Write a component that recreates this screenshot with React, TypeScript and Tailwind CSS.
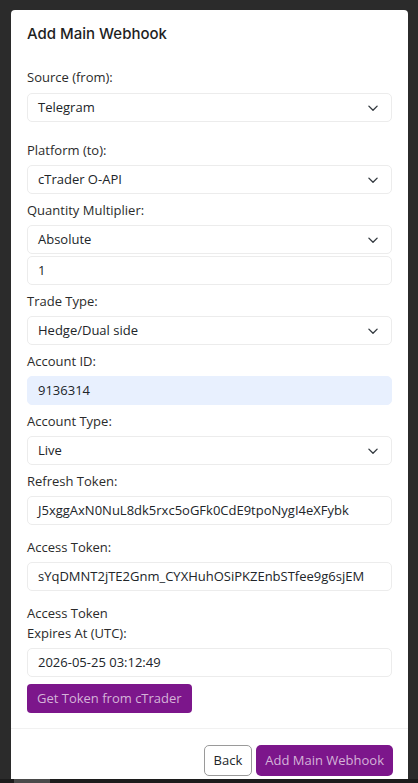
import React from "react";

const Chevron = () => (
  <svg className="h-3 w-3 text-[#343a40]" viewBox="0 0 16 16" fill="none" stroke="currentColor">
    <path strokeLinecap="round" strokeLinejoin="round" strokeWidth={1.8} d="m2.5 5.5 5.5 5.5 5.5-5.5" />
  </svg>
);

const Label = ({ children, className = "" }: { children: React.ReactNode; className?: string }) => (
  <label className={`block text-[13px] leading-[20px] text-[#2b2b2b] mb-[5px] ${className}`}>{children}</label>
);

const Select = ({ value }: { value: string }) => (
  <div className="flex h-[29px] items-center justify-between rounded-[5px] border border-[#ececec] bg-white pl-[10px] pr-[12px] text-[13px] text-[#212529]">
    <span>{value}</span>
    <Chevron />
  </div>
);

const Input = ({ value, filled = false }: { value: string; filled?: boolean }) => (
  <div
    className={`flex h-[29px] items-center rounded-[5px] border px-[10px] text-[13px] text-[#212529] ${
      filled ? "border-[#e8f0fe] bg-[#e8f0fe]" : "border-[#ececec] bg-white"
    }`}
  >
    {value}
  </div>
);

export default function App() {
  return (
    <div className="min-h-[783px] bg-[#2b2b2b] pt-[10px] px-[11px] flex flex-col" style={{ fontFamily: "'Open Sans', sans-serif" }}>
      <div className="flex flex-col rounded-t-[4px] bg-white w-[397px] h-[769px]">
        {/* header */}
        <div className="px-[16px] pt-[14px] h-[53px]">
          <h2 className="text-[15px] leading-[20px] font-medium text-[#1f1f1f]" style={{ fontFamily: "Inter, sans-serif" }}>
            Add Main Webhook
          </h2>
        </div>

        {/* body */}
        <div className="flex flex-col px-[16px] pt-[4px]">
          <Label className="mb-[6px]">Source (from):</Label>
          <Select value="Telegram" />

          <Label className="mt-[18px]">Platform (to):</Label>
          <Select value="cTrader O-API" />

          <Label className="mt-[6px]">Quantity Multiplier:</Label>
          <Select value="Absolute" />
          <div className="mt-[2px]">
            <Input value="1" />
          </div>

          <Label className="mt-[6px]">Trade Type:</Label>
          <Select value="Hedge/Dual side" />

          <Label className="mt-[6px]">Account ID:</Label>
          <Input value="9136314" filled />

          <Label className="mt-[6px]">Account Type:</Label>
          <Select value="Live" />

          <Label className="mt-[6px]">Refresh Token:</Label>
          <Input value="J5xggAxN0NuL8dk5rxc5oGFk0CdE9tpoNygI4eXFybk" />

          <Label className="mt-[12px]">Access Token:</Label>
          <Input value="sYqDMNT2jTE2Gnm_CYXHuhOSiPKZEnbSTfee9g6sjEM" />

          <Label className="mt-[12px]">
            Access Token
            <br />
            Expires At (UTC):
          </Label>
          <Input value="2026-05-25 03:12:49" />

          <div className="mt-[7px]">
            <button className="h-[29px] rounded-[4px] bg-[#7c168b] px-[10px] text-[13px] text-[#d4b3d8]">
              Get Token from cTrader
            </button>
          </div>
        </div>

        {/* footer */}
        <div className="mt-[15px] border-t border-[#f1f1f1] flex justify-end gap-[4px] px-[15px] pt-[16px]">
          <button className="h-[31px] rounded-[5px] border border-[#9a9a9a] bg-white px-[9px] text-[13px] text-[#212529]">
            Back
          </button>
          <button className="h-[31px] rounded-[5px] bg-[#7c168b] px-[9px] text-[13px] text-[#d4b3d8]">
            Add Main Webhook
          </button>
        </div>
      </div>
      <div className="flex h-[4px] bg-[#1c1c1c] -mx-[11px]">
        <div className="ml-[14px] w-[36px] bg-[#4a4a4a]" />
      </div>
    </div>
  );
}
